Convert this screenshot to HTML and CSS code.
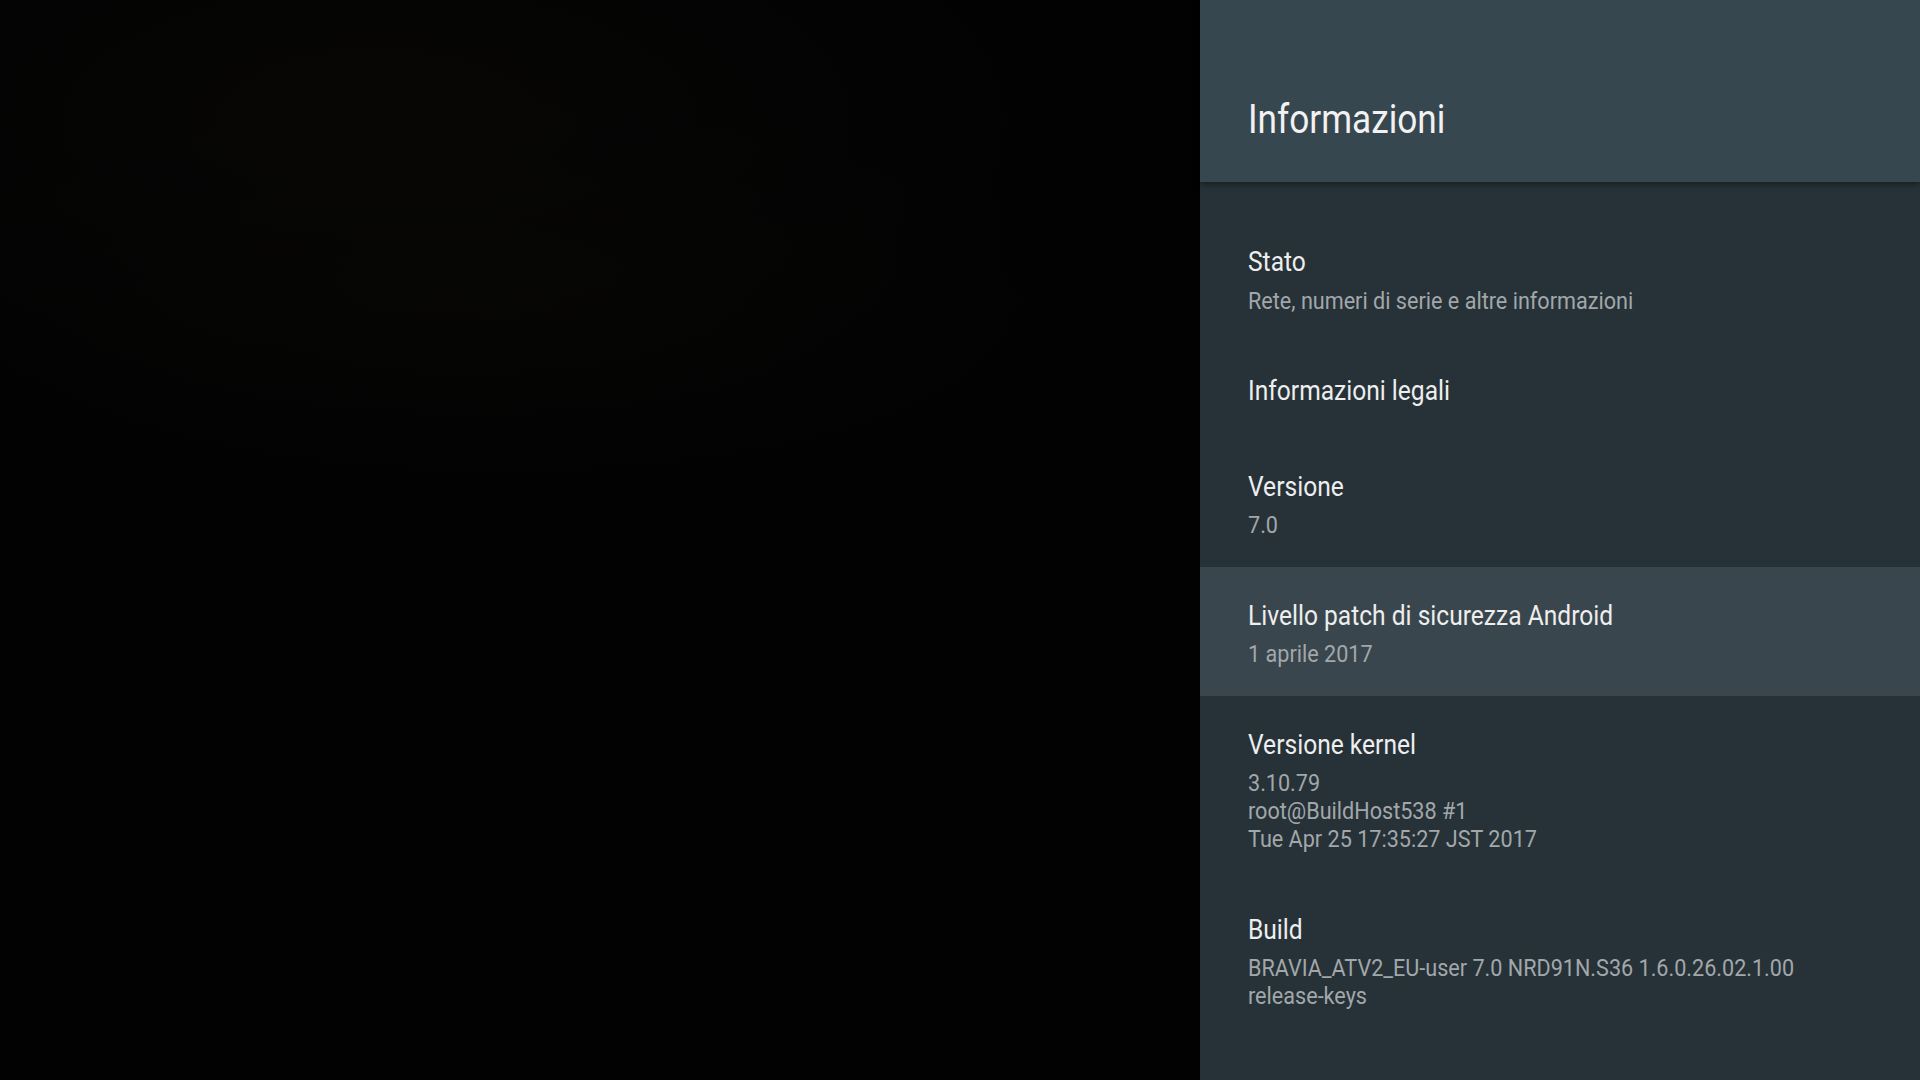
FILE: index.html
```html
<!DOCTYPE html>
<html lang="it">
<head>
<meta charset="utf-8">
<title>Informazioni</title>
<link rel="stylesheet" href="styles.css">
</head>
<body>
<div class="screen">
  <div class="backdrop"></div>
  <aside class="panel">
    <header class="panel-header">
      <h1 class="panel-title"><span class="cond">Informazioni</span></h1>
    </header>
    <ul class="pref-list">
      <li class="pref">
        <div class="pref-title"><span class="cond">Stato</span></div>
        <div class="pref-summary"><span class="cond">Rete, numeri di serie e altre informazioni</span></div>
      </li>
      <li class="pref">
        <div class="pref-title"><span class="cond">Informazioni legali</span></div>
      </li>
      <li class="pref">
        <div class="pref-title"><span class="cond">Versione</span></div>
        <div class="pref-summary"><span class="cond">7.0</span></div>
      </li>
      <li class="pref pref-focused">
        <div class="pref-title"><span class="cond">Livello patch di sicurezza Android</span></div>
        <div class="pref-summary"><span class="cond">1 aprile 2017</span></div>
      </li>
      <li class="pref">
        <div class="pref-title"><span class="cond">Versione kernel</span></div>
        <div class="pref-summary"><span class="cond">3.10.79<br>root@BuildHost538 #1<br>Tue Apr 25 17:35:27 JST 2017</span></div>
      </li>
      <li class="pref">
        <div class="pref-title"><span class="cond">Build</span></div>
        <div class="pref-summary"><span class="cond">BRAVIA_ATV2_EU-user 7.0 NRD91N.S36 1.6.0.26.02.1.00<br>release-keys</span></div>
      </li>
    </ul>
  </aside>
</div>
</body>
</html>
```
FILE: styles.css
```css
* { box-sizing: border-box; }
html, body {
  margin: 0;
  padding: 0;
  width: 1920px;
  height: 1080px;
  overflow: hidden;
  background: #020202;
  font-family: Roboto, "Noto Sans", sans-serif;
}
.screen {
  display: flex;
  width: 1920px;
  height: 1080px;
}
.backdrop {
  flex: 0 0 1200px;
  height: 100%;
  background:
    radial-gradient(ellipse 700px 300px at 380px 120px, #070605 0%, rgba(7,6,5,0) 100%),
    radial-gradient(ellipse 600px 200px at 500px 300px, #050504 0%, rgba(5,5,4,0) 100%),
    #020202;
}
.panel {
  flex: 0 0 720px;
  height: 100%;
  background: #263238;
  display: flex;
  flex-direction: column;
}
.panel-header {
  position: relative;
  height: 182px;
  background: #37474f;
  padding: 96px 48px 0 48px;
  box-shadow: 0 2px 6px rgba(0, 0, 0, 0.45);
  z-index: 1;
}
.panel-title {
  margin: 0;
  font-weight: 400;
  font-size: 40px;
  line-height: 48px;
  color: #f2f2f2;
  white-space: nowrap;
}
.cond {
  display: inline-block;
  transform: scaleX(0.88);
  transform-origin: 0 50%;
  white-space: nowrap;
}
.pref-list {
  list-style: none;
  margin: 0;
  padding: 31px 0 0 0;
}
.pref {
  padding: 30px 48px 27.5px 48px;
}
.pref-focused {
  background: #3a464d;
}
.pref-title {
  font-size: 27px;
  line-height: 38px;
  color: #eeeeee;
  white-space: nowrap;
}
.pref-title .cond {
  transform: scaleX(0.91);
}
.pref-summary {
  margin-top: 5.5px;
  font-size: 24px;
  line-height: 28px;
  color: #a2a7aa;
  white-space: nowrap;
}
.pref-summary .cond {
  transform: scaleX(0.9);
}
```
